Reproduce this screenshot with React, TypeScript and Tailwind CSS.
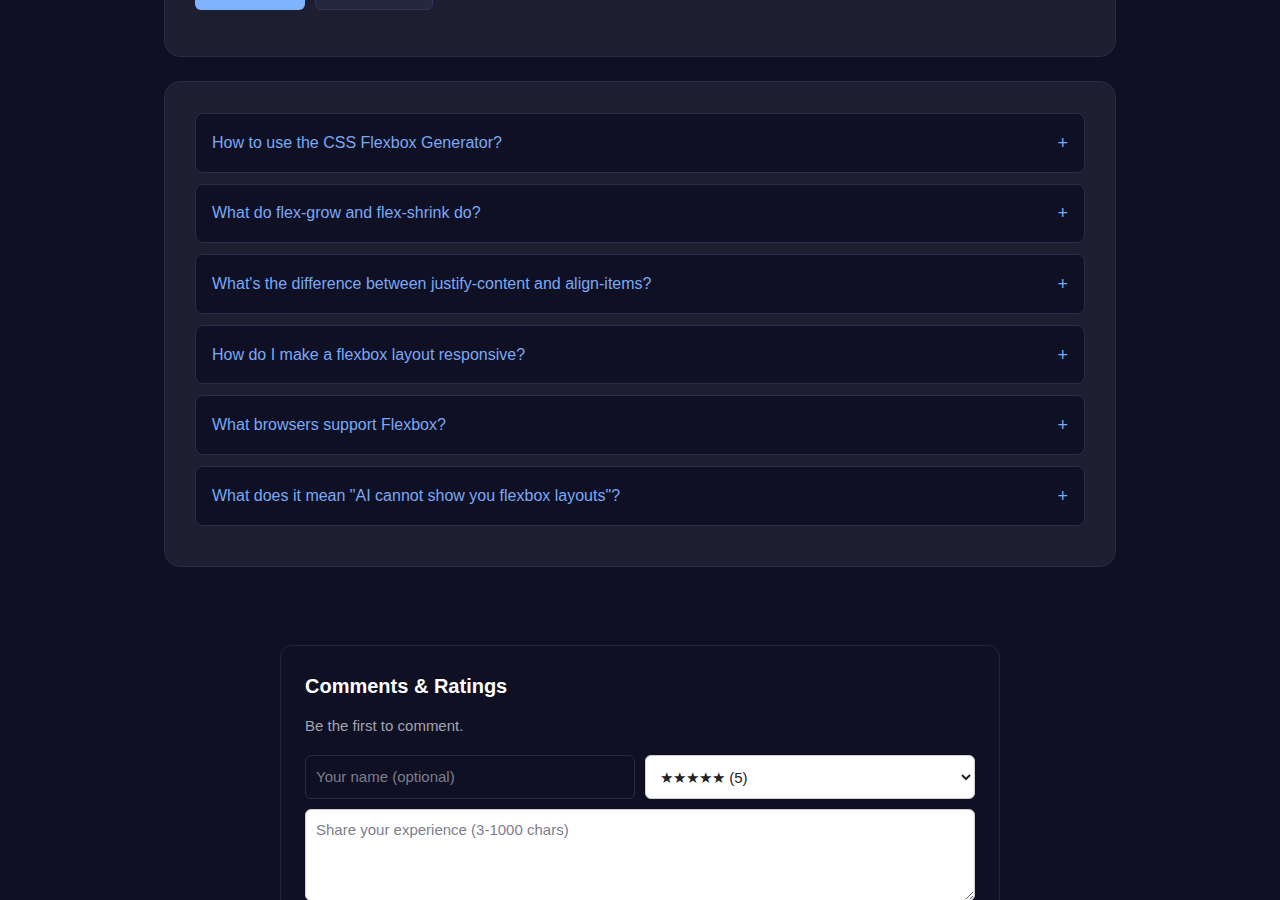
import { useState } from "react";

const FAQS = [
  "How to use the CSS Flexbox Generator?",
  "What do flex-grow and flex-shrink do?",
  "What's the difference between justify-content and align-items?",
  "How do I make a flexbox layout responsive?",
  "What browsers support Flexbox?",
  'What does it mean "AI cannot show you flexbox layouts"?',
];

function FaqItem({ q }: { q: string }) {
  const [open, setOpen] = useState(false);
  return (
    <div className="rounded-lg border border-[#2b2c4a] bg-[#0f1024]">
      <button
        type="button"
        onClick={() => setOpen(!open)}
        className="flex h-[57.6px] w-full items-center justify-between px-4 text-left text-base text-[#7aa9f5]"
      >
        <span>{q}</span>
        <span className="text-lg leading-none">{open ? "−" : "+"}</span>
      </button>
    </div>
  );
}

export default function App() {
  const [rating, setRating] = useState("5");
  return (
    <div
      className="min-h-[900px] overflow-hidden bg-[#0f1023] pb-10"
      style={{ fontFamily: '"Liberation Sans", Arial, sans-serif' }}
    >
      <div className="mx-auto flex w-[952px] flex-col gap-[24px]">
        {/* tail of the generator card, scrolled mostly off screen */}
        <div className="-mt-[41px] rounded-2xl border border-[#2a2b45] bg-[#1d1e2f] px-[30px] pt-[10px] pb-[46px]">
          <div className="flex gap-[10px]">
            <button
              type="button"
              className="h-10 w-[110px] rounded-md bg-[#7eb3ff]"
            />
            <button
              type="button"
              className="h-10 w-[118px] rounded-md border border-[#33345a] bg-[#25263f]"
            />
          </div>
        </div>

        <div className="flex flex-col gap-[11px] rounded-2xl border border-[#2a2b45] bg-[#1d1e2f] px-[30px] pt-[31px] pb-[40px]">
          {FAQS.map((q) => (
            <FaqItem key={q} q={q} />
          ))}
        </div>
      </div>

      <div className="mx-auto mt-[78px] w-[720px] rounded-xl border border-[#23243a] bg-[#0f1023] px-6 pt-[26px] pb-6">
        <h3 className="text-xl font-bold leading-7 text-white">
          Comments &amp; Ratings
        </h3>
        <p className="mt-[15px] text-[15px] text-[#a3a4b4]">
          Be the first to comment.
        </p>
        <div className="mt-[18px] flex gap-[10px]">
          <input
            placeholder="Your name (optional)"
            className="h-11 flex-1 rounded-md border border-[#2a2b40] bg-[#0f1023] px-[10px] pb-[2px] text-[15px] text-white placeholder:text-[#7d7e8c] outline-none"
          />
          <select
            value={rating}
            onChange={(e) => setRating(e.target.value)}
            className="h-11 flex-1 rounded-md border border-[#cfcfcf] bg-white px-[10px] text-[15px] text-[#222]"
          >
            <option value="5">★★★★★ (5)</option>
            <option value="4">★★★★☆ (4)</option>
            <option value="3">★★★☆☆ (3)</option>
            <option value="2">★★☆☆☆ (2)</option>
            <option value="1">★☆☆☆☆ (1)</option>
          </select>
        </div>
        <textarea
          placeholder="Share your experience (3-1000 chars)"
          className="mt-[10px] block h-[92px] w-full rounded-md border border-[#cfcfcf] bg-white px-[10px] pt-[9px] pb-[10px] text-[15px] text-[#222] placeholder:text-[#7d7e8c]"
        />
      </div>
    </div>
  );
}
